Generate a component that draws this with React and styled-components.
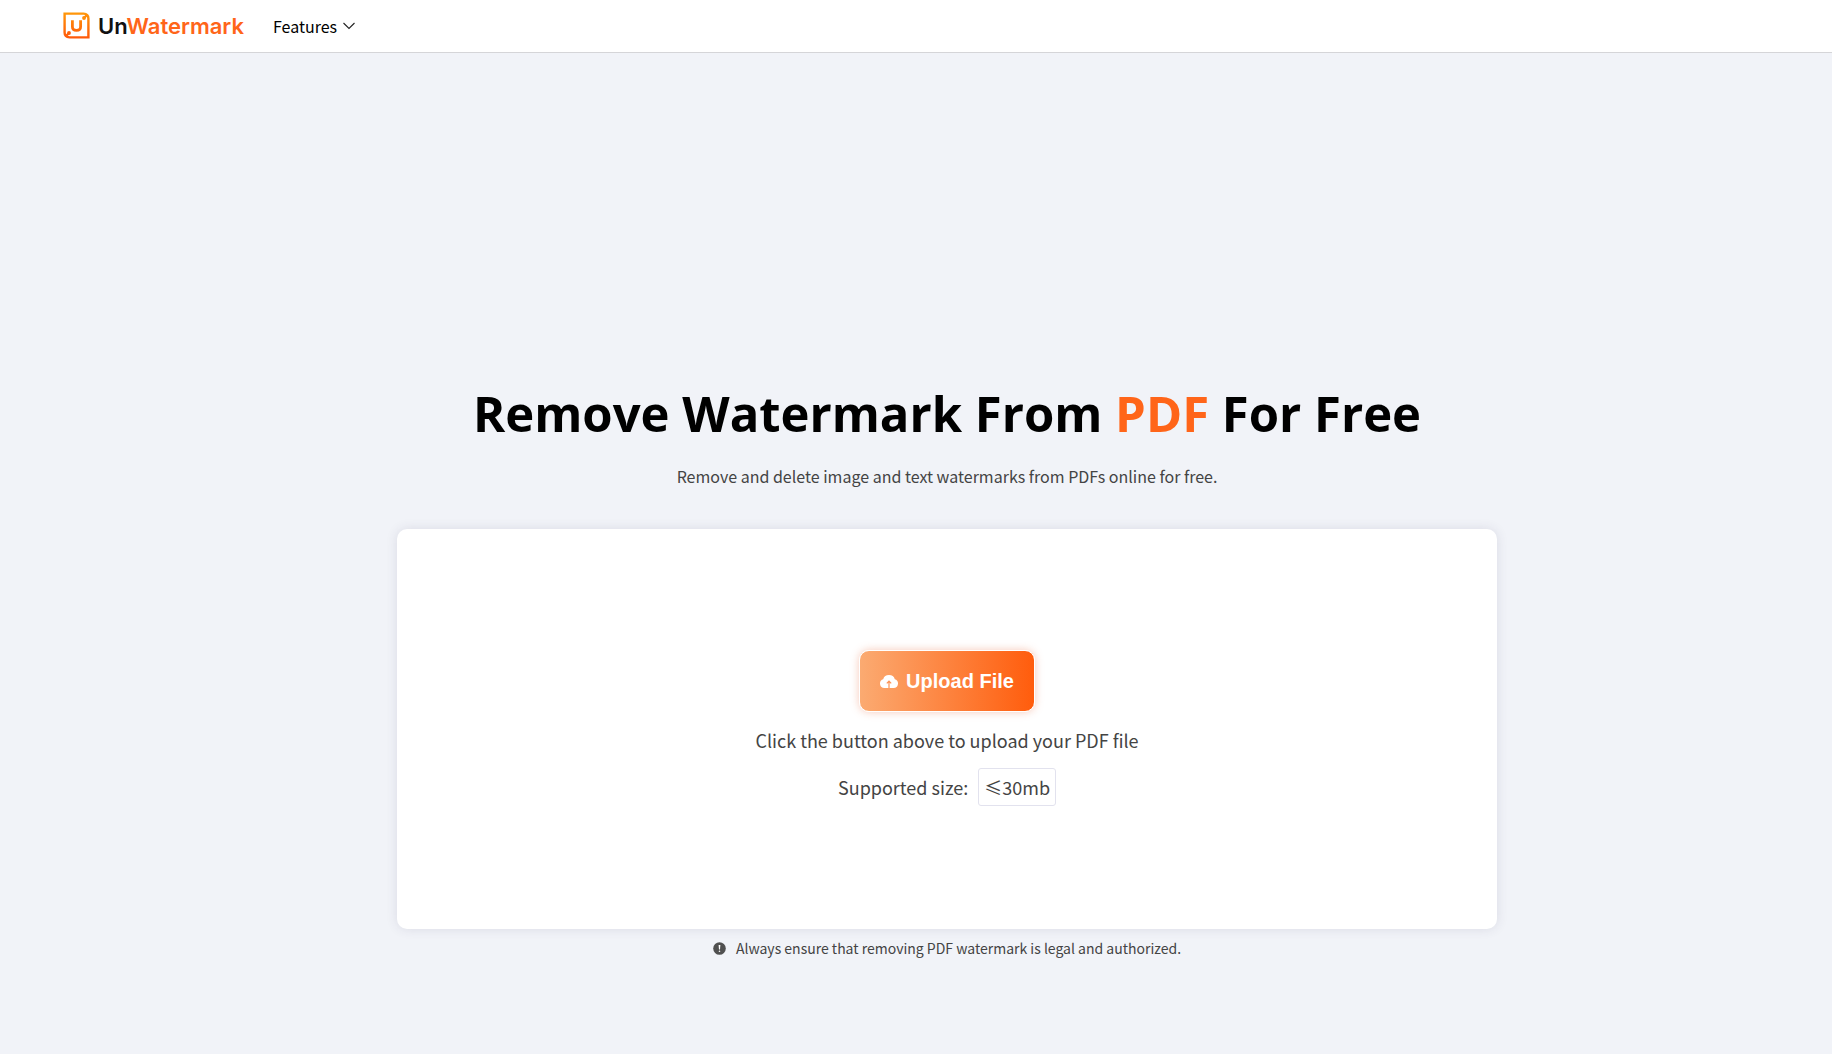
import React, { useRef } from "react";
import styled, { createGlobalStyle } from "styled-components";

const GlobalStyle = createGlobalStyle`
    * {
        box-sizing: border-box;
    }

    body {
        margin: 0;
        background-color: #f1f3f8;
        color: #444;
        font-family: "Noto Sans CJK SC", "Noto Sans", sans-serif;
    }
`;

const Header = styled.header`
    height: 53px;
    padding: 0 63px 1px;
    background-color: #fff;
    border-bottom: 1px solid #d5d5d8;

    display: flex;
    align-items: center;
    gap: 29px;
`;

const Brand = styled.a`
    display: flex;
    align-items: center;
    gap: 8px;

    color: #111;
    font-family: Inter, sans-serif;
    font-size: 22px;
    font-weight: 600;
    line-height: 28px;
    text-decoration: none;
`;

const Accent = styled.span`
    color: #ff6519;
`;

const MenuButton = styled.button`
    display: flex;
    align-items: center;
    gap: 6px;
    padding: 0;
    border: 0;
    background: none;

    color: #000;
    font-family: inherit;
    font-size: 16px;
    line-height: 24px;
    cursor: pointer;
`;

const Main = styled.main`
    padding: 324px 0 80px 62px;

    display: flex;
    flex-direction: column;
    align-items: center;
`;

const Title = styled.h1`
    margin: 0;
    color: #000;
    font-family: "Open Sans", sans-serif;
    font-size: 49px;
    font-weight: 700;
    line-height: 72px;
    text-align: center;
`;

const Subtitle = styled.p`
    margin: 14px 0 0;
    font-size: 16px;
    line-height: 26px;
`;

const UploadCard = styled.section`
    width: 100%;
    max-width: 1100px;
    min-height: 400px;
    margin-top: 40px;
    padding-bottom: 2px;
    border-radius: 10px;
    background-color: #fff;
    box-shadow: 0 0 12px rgba(60, 50, 90, 0.12);

    display: flex;
    flex-direction: column;
    align-items: center;
    justify-content: center;
`;

const UploadButton = styled.button`
    height: 62px;
    padding: 0 20px;
    border: 1px solid #fff;
    border-radius: 10px;
    background: linear-gradient(90deg, #fbab72, #ff5c0c) border-box;
    box-shadow: 0 0 8px rgba(235, 120, 80, 0.4);

    display: flex;
    align-items: center;
    gap: 8px;

    color: #fff;
    font-family: "Liberation Sans", sans-serif;
    font-size: 20px;
    font-weight: 700;
    cursor: pointer;
`;

const Hint = styled.p`
    margin: 13px 0;
    font-size: 18px;
    line-height: 30px;
`;

const SizeRow = styled.div`
    display: flex;
    align-items: center;
    gap: 10px;
    font-size: 18px;
    line-height: 30px;
`;

const SizeLimit = styled.span`
    padding: 3px 5px;
    border: 1px solid #e2e2ee;
    border-radius: 3px;
`;

const Notice = styled.p`
    margin: 8px 0 0;
    font-size: 14px;
    line-height: 22px;

    display: flex;
    align-items: center;
    gap: 10px;
`;

const LogoIcon = () => (
    <svg width="27" height="27" viewBox="0 0 27 27" fill="none" aria-hidden="true">
        <defs>
            <linearGradient id="logoFill" x1="0" y1="0" x2="0" y2="27" gradientUnits="userSpaceOnUse">
                <stop stopColor="#ff9a0a" />
                <stop offset="1" stopColor="#ff560a" />
            </linearGradient>
        </defs>
        <g stroke="url(#logoFill)">
            <path d="M1.6 1.6H20.5Q25.4 2 25.4 6.5V25.4H6.5Q1.6 25 1.6 20.5Z" strokeWidth="2.4" />
            <path d="M9.4 8.2V14.8Q9.4 18.4 13.5 18.4Q17.6 18.4 17.6 14.8V8.2" strokeWidth="2.8" />
        </g>
        <path d="M21 6L24 3" stroke="#ff8d0a" strokeWidth="2.4" />
        <path d="M3 24L6 21" stroke="#ff620a" strokeWidth="2.4" />
        <circle cx="21" cy="6" r="1.9" fill="#ff8d0a" />
        <circle cx="6" cy="21" r="1.9" fill="#ff620a" />
    </svg>
);

const ChevronIcon = () => (
    <svg width="12" height="8" viewBox="0 0 12 8" fill="none" aria-hidden="true">
        <path d="M0.5 1L6 6.5L11.5 1" stroke="#222" strokeWidth="1.1" />
    </svg>
);

const CloudIcon = () => (
    <svg width="18" height="14" viewBox="0 0 18 14" aria-hidden="true">
        <path
            d="M4.6 14A4.5 4.5 0 0 1 3.2 5.2A6 5.6 0 0 1 14.8 5.2A4.5 4.5 0 0 1 13.4 14Z"
            fill="#fff"
        />
        <path d="M9 14V7.5M6.8 9.3L9 7.1L11.2 9.3" fill="none" stroke="#fd9354" strokeWidth="1.2" />
    </svg>
);

const AlertIcon = () => (
    <svg width="13" height="13" viewBox="0 0 13 13" aria-hidden="true">
        <circle cx="6.5" cy="6.5" r="6.3" fill="#505050" />
        <path d="M5.6 3H7.4L7 7.5H6Z" fill="#fff" />
        <circle cx="6.5" cy="9.2" r="0.8" fill="#fff" />
    </svg>
);

const App = () => {
    const fileInput = useRef(null);

    return (
        <>
            <GlobalStyle />
            <Header>
                <Brand href="#">
                    <LogoIcon />
                    <span>Un<Accent>Watermark</Accent></span>
                </Brand>
                <MenuButton type="button" aria-haspopup="true">
                    Features
                    <ChevronIcon />
                </MenuButton>
            </Header>

            <Main>
                <Title>
                    Remove Watermark From <Accent>PDF</Accent> For Free
                </Title>
                <Subtitle>Remove and delete image and text watermarks from PDFs online for free.</Subtitle>

                <UploadCard>
                    <input ref={fileInput} type="file" accept="application/pdf" aria-label="PDF file" hidden />
                    <UploadButton type="button" onClick={() => fileInput.current.click()}>
                        <CloudIcon />
                        Upload File
                    </UploadButton>
                    <Hint>Click the button above to upload your PDF file</Hint>
                    <SizeRow>
                        Supported size:
                        <SizeLimit>≤30mb</SizeLimit>
                    </SizeRow>
                </UploadCard>

                <Notice>
                    <AlertIcon />
                    Always ensure that removing PDF watermark is legal and authorized.
                </Notice>
            </Main>
        </>
    );
};

export default App;
